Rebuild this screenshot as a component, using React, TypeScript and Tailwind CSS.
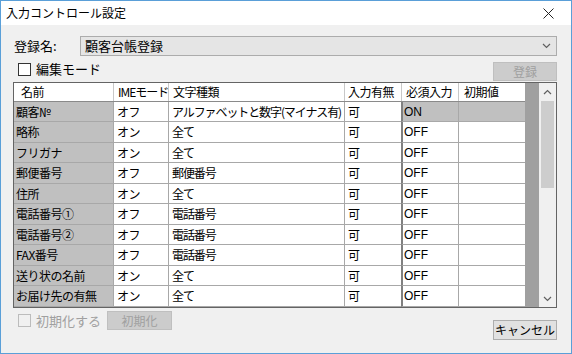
const rows = [
  { name: "顧客№", ime: "オフ", kind: "アルファベットと数字(マイナス有)", input: "可", req: "ON", sel: true },
  { name: "略称", ime: "オン", kind: "全て", input: "可", req: "OFF" },
  { name: "フリガナ", ime: "オン", kind: "全て", input: "可", req: "OFF" },
  { name: "郵便番号", ime: "オフ", kind: "郵便番号", input: "可", req: "OFF" },
  { name: "住所", ime: "オン", kind: "全て", input: "可", req: "OFF" },
  { name: "電話番号①", ime: "オフ", kind: "電話番号", input: "可", req: "OFF" },
  { name: "電話番号②", ime: "オフ", kind: "電話番号", input: "可", req: "OFF" },
  { name: "FAX番号", ime: "オフ", kind: "電話番号", input: "可", req: "OFF" },
  { name: "送り状の名前", ime: "オン", kind: "全て", input: "可", req: "OFF" },
  { name: "お届け先の有無", ime: "オン", kind: "全て", input: "可", req: "OFF" },
]

const font = "font-['Noto_Sans_CJK_JP','Noto_Sans',sans-serif]"

function Chevron({ up }: { up?: boolean }) {
  return (
    <svg width="9" height="6" viewBox="0 0 9 6" className="block">
      <path d={up ? "M1 5 L4.5 1.5 L8 5" : "M1 1 L4.5 4.5 L8 1"} fill="none" stroke="#606060" strokeWidth="1.2" />
    </svg>
  )
}

function Grid() {
  return (
    <div className="flex h-[226px] w-[544px] border border-[#646464] bg-white">
      <div className="flex w-[511px] flex-col">
        <div className="flex h-[19px] flex-none items-center whitespace-nowrap border-b border-[#8a8a8a] text-[12px] leading-none tracking-[-0.5px] text-black">
          <div className="w-[99px] pl-[7px]">名前</div>
          <div className="flex h-full w-[55px] items-center border-l border-[#c8c8c8] pl-[4px] tracking-[-1px]">IMEモード</div>
          <div className="flex h-full w-[176px] items-center border-l border-[#c8c8c8] pl-[4px]">文字種類</div>
          <div className="flex h-full w-[57px] items-center border-l border-[#c8c8c8] pl-[3px]">入力有無</div>
          <div className="flex h-full w-[57px] items-center border-l border-[#c8c8c8] pl-[4px]">必須入力</div>
          <div className="flex h-full w-[67px] items-center border-l border-[#c8c8c8] pl-[5px]">初期値</div>
        </div>
        {rows.map((r, i) => (
          <div
            key={r.name}
            className={`flex flex-none whitespace-nowrap text-[12px] leading-none tracking-[-0.5px] text-black ${i % 2 === 0 ? "h-[20px]" : "h-[21px]"}`}
          >
            <div className="flex w-[99px] items-center overflow-hidden border-b border-[#a8a8a8] bg-[#c0c0c0] pl-[2px]">{r.name}</div>
            <div className="flex w-[55px] items-center border-b border-l border-[#a8a8a8] pl-[3px]">{r.ime}</div>
            <div className="flex w-[176px] items-center overflow-hidden border-b border-l border-[#a8a8a8] pl-[3px] tracking-[-1.1px]">
              {r.kind}
            </div>
            <div className="flex w-[57px] items-center border-b border-l border-[#a8a8a8] pl-[3px]">{r.input}</div>
            <div
              className={`flex w-[57px] items-center border-b border-l-2 border-b-[#a8a8a8] border-l-[#808080] pl-[1px] font-['Liberation_Sans',sans-serif] tracking-normal ${r.sel ? "bg-[#c0c0c0]" : ""}`}
            >
              {r.req}
            </div>
            <div className={`w-[67px] border-b border-l border-[#a8a8a8] ${r.sel ? "bg-[#c0c0c0]" : ""}`} />
          </div>
        ))}
      </div>
      <div className="w-[14px] bg-[#a0a0a0]" />
      <div className="flex w-[17px] flex-col bg-[#f0f0f0]">
        <div className="flex h-[18px] items-center justify-center">
          <Chevron up />
        </div>
        <div className="mx-[2px] h-[87px] bg-[#cdcdcd]" />
        <div className="flex-1" />
        <div className="flex h-[17px] items-center justify-center">
          <Chevron />
        </div>
      </div>
    </div>
  )
}

export default function App() {
  return (
    <div className={`flex h-[354px] w-[572px] flex-col border border-[#5a9fd8] bg-[#f0f0f0] ${font}`}>
      <div className="flex h-[24px] flex-none items-center justify-between bg-white pl-[5px] pr-[17px] text-[12px] text-black">
        <span>入力コントロール設定</span>
        <svg width="11" height="11" viewBox="0 0 11 11">
          <path d="M0.5 0.5 L10.5 10.5 M10.5 0.5 L0.5 10.5" stroke="#222" strokeWidth="1" />
        </svg>
      </div>

      <div className="flex flex-1 flex-col pl-[12px] pr-[14px]">
        <div className="mt-[11px] flex h-[20px] items-center">
          <span className="w-[67px] pl-[1px] text-[13px] text-black">登録名:</span>
          <div className="flex h-[20px] flex-1 items-center justify-between border border-[#acacac] bg-[#e5e5e5] pl-[4px] pr-[5px] text-[13px] text-black">
            <span>顧客台帳登録</span>
            <Chevron />
          </div>
        </div>

        <div className="mt-[6px] flex h-[19px] items-start">
          <div className="flex h-[14px] items-center">
            <div className="ml-[5px] h-[13px] w-[13px] border border-[#333] bg-white" />
            <span className="ml-[5px] text-[13px] text-black">編集モード</span>
          </div>
          <button
            type="button"
            className="ml-auto flex h-[19px] w-[64px] items-center justify-center border border-[#bfbfbf] bg-[#cccccc] text-[12px] text-[#a0a0a0]"
          >
            登録
          </button>
        </div>

        <div className="mt-[1px]">
          <Grid />
        </div>

        <div className="flex items-start">
          <div className="mt-[3px] flex h-[19px] items-center">
            <div className="ml-[5px] h-[13px] w-[13px] border border-[#bcbcbc] bg-[#f0f0f0]" />
            <span className="ml-[5px] text-[13px] text-[#a0a0a0]">初期化する</span>
            <button
              type="button"
              className="ml-[6px] flex h-[19px] w-[65px] items-center justify-center border border-[#bfbfbf] bg-[#cccccc] text-[12px] text-[#a0a0a0]"
            >
              初期化
            </button>
          </div>
          <button
            type="button"
            className="ml-auto mt-[12px] flex h-[20px] w-[64px] items-center justify-center border border-[#adadad] bg-[#e1e1e1] text-[12px] text-black"
          >
            キャンセル
          </button>
        </div>
      </div>
    </div>
  )
}
